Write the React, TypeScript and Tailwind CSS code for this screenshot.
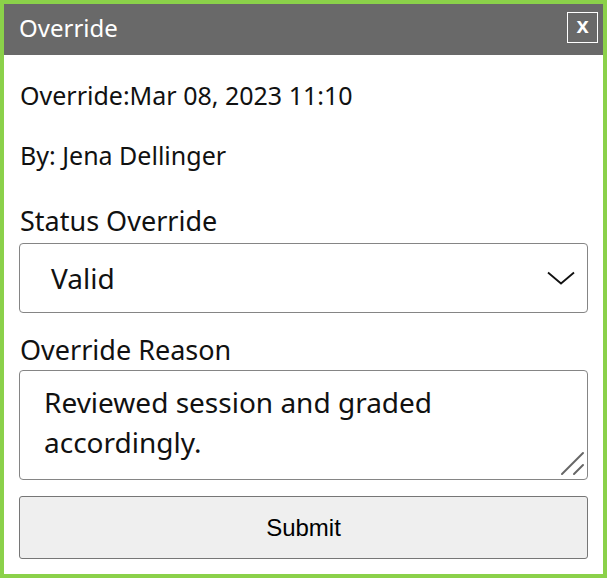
import React from "react";

export default function App() {
  return (
    <div
      className="w-[607px] h-[578px] border-4 border-[#8bd14a] bg-white flex flex-col"
      style={{ fontFamily: '"Noto Sans", sans-serif' }}
    >
      <div className="h-[51px] bg-[#696969] flex items-center justify-between pl-[15px] pr-[5px] pb-[4px] shrink-0">
        <span className="text-white text-[24px] leading-[32px]">Override</span>
        <button className="w-[31px] h-[31px] border border-white flex items-center justify-center text-white font-bold text-[22px] leading-none pb-[3px]" style={{ fontFamily: '"Liberation Sans", Arial, sans-serif' }}>
          x
        </button>
      </div>
      <div className="flex flex-col px-[15px]">
        <div className="mt-[24px] pl-[1px] text-[25px] leading-[32px] text-[#111]">Override:Mar 08, 2023 11:10</div>
        <div className="mt-[28px] pl-[1px] text-[25px] leading-[32px] text-[#111]">By: Jena Dellinger</div>
        <label className="mt-[34px] pl-[1px] text-[27px] leading-[32px] text-[#111]">Status Override</label>
        <div className="mt-[6px] h-[70px] border border-[#858585] rounded-[4px] flex items-center justify-between pl-[31px] pr-[12px]">
          <span className="text-[28px] leading-[40px] text-[#111]">Valid</span>
          <svg width="28" height="14" viewBox="0 0 28 14" fill="none">
            <path d="M1 1.5 L14 12.5 L27 1.5" stroke="#111" strokeWidth="1.8" />
          </svg>
        </div>
        <label className="mt-[21px] pl-[1px] text-[27px] leading-[32px] text-[#111]">Override Reason</label>
        <div className="relative mt-[4px] h-[110px] border border-[#858585] rounded-[4px] pl-[24px] pr-[24px] pt-[11px]">
          <div className="text-[28px] leading-[40px] text-[#111]">Reviewed session and graded accordingly.</div>
          <svg className="absolute right-[2px] bottom-[2px]" width="26" height="26" viewBox="0 0 26 26" fill="none">
            <path d="M3 23 L24 2" stroke="#666" strokeWidth="2" strokeLinecap="round" />
            <path d="M15 23 L24 14" stroke="#666" strokeWidth="2" strokeLinecap="round" />
          </svg>
        </div>
        <button
          className="mt-[16px] h-[63px] bg-[#efefef] border border-[#767676] rounded-[3px] text-[24px] text-black"
          style={{ fontFamily: '"Liberation Sans", Arial, sans-serif' }}
        >
          Submit
        </button>
      </div>
    </div>
  );
}
